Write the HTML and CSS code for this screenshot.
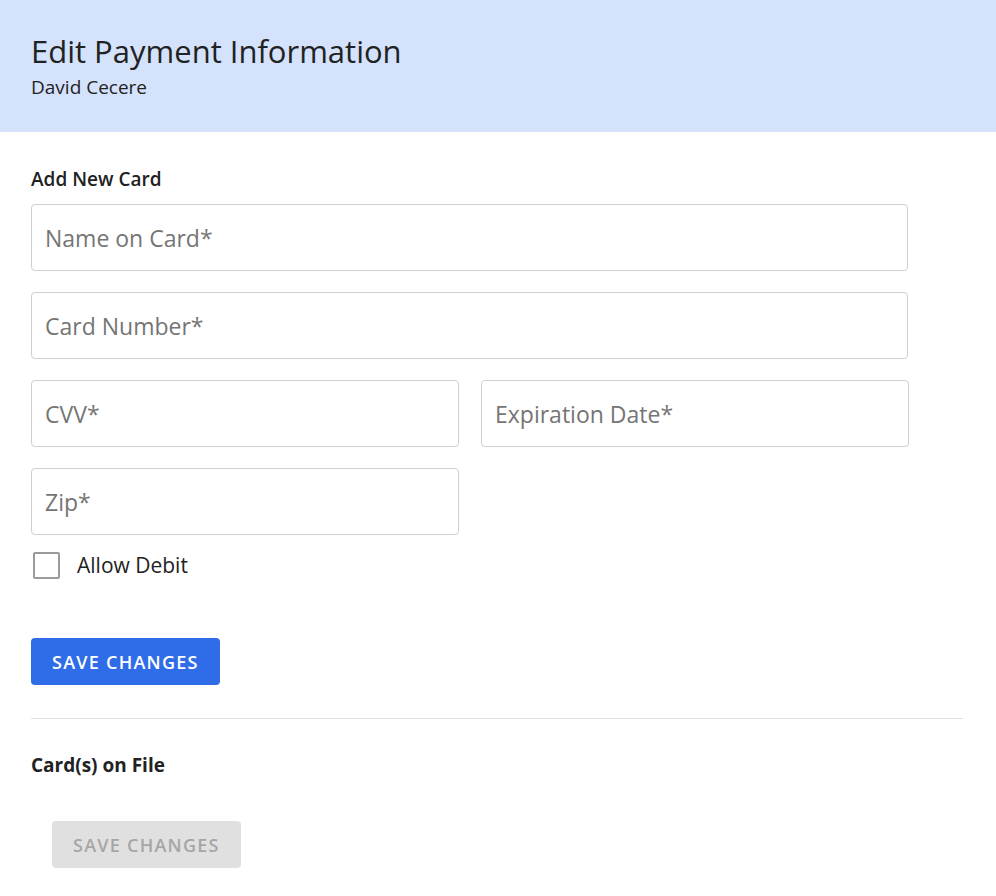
FILE: index.html
```html
<!DOCTYPE html>
<html>
<head>
<meta charset="utf-8">
<link rel="stylesheet" href="styles.css">
</head>
<body>
<header class="header">
  <h1 class="title">Edit Payment Information</h1>
  <div class="subtitle">David Cecere</div>
</header>
<main class="content">
  <h2 class="section-title">Add New Card</h2>
  <form class="form">
    <div class="field"><input class="input" placeholder="Name on Card*"></div>
    <div class="field"><input class="input" placeholder="Card Number*"></div>
    <div class="row">
      <input class="input" placeholder="CVV*">
      <input class="input" placeholder="Expiration Date*">
    </div>
    <div class="row">
      <input class="input" placeholder="Zip*">
    </div>
    <label class="check">
      <span class="box"></span>
      <span class="check-label">Allow Debit</span>
    </label>
    <button type="button" class="btn btn-primary">SAVE CHANGES</button>
  </form>
  <hr class="divider">
  <h2 class="section-title files">Card(s) on File</h2>
  <div class="files-actions">
    <button type="button" class="btn btn-disabled" disabled>SAVE CHANGES</button>
  </div>
</main>
</body>
</html>
```
FILE: styles.css
```css
* { box-sizing: border-box; }
body {
  margin: 0;
  font-family: "Open Sans", "Noto Sans", sans-serif;
  color: #212121;
  background: #fff;
}
.header {
  background: #d4e2fc;
  height: 132px;
  padding: 31px 31px 0;
}
.title {
  margin: 0;
  font-size: 31px;
  font-weight: 400;
  line-height: 40px;
  color: #222;
}
.subtitle {
  font-size: 19px;
  line-height: 26px;
  margin-top: 3px;
  color: #222;
}
.content {
  padding: 34px 33px 0 31px;
}
.section-title {
  margin: 0;
  font-size: 19px;
  font-weight: 600;
  line-height: 26px;
  color: #222;
}
.form {
  width: 877px;
  margin-top: 12px;
  display: flex;
  flex-direction: column;
  gap: 21px;
}
.input {
  display: block;
  width: 100%;
  height: 67px;
  border: 1px solid #cfcfcf;
  border-radius: 4px;
  padding: 0 13px;
  font-family: inherit;
  font-size: 23px;
  color: #222;
  background: #fff;
  outline: none;
}
.input::placeholder { color: #757575; }
.row {
  display: grid;
  grid-template-columns: 428px 428px;
  gap: 22px;
}
.check {
  display: flex;
  align-items: center;
  gap: 17px;
  margin-top: -5px;
  margin-left: 2px;
  height: 28px;
}
.box {
  width: 27px;
  height: 27px;
  border: 2px solid #9b9b9b;
  border-radius: 2px;
}
.check-label {
  font-size: 21px;
  color: #222;
}
.btn {
  height: 47px;
  border: none;
  border-radius: 4px;
  padding: 0 21px;
  font-family: inherit;
  font-size: 18px;
  font-weight: 600;
  letter-spacing: 1.25px;
}
.btn-primary {
  align-self: flex-start;
  margin-top: 38px;
  background: #2f6ce8;
  color: #fff;
}
.divider {
  margin: 33px 0 0;
  border: none;
  border-top: 1px solid #e0e0e0;
}
.files {
  margin-top: 33px;
  font-weight: 700;
}
.files-actions {
  padding: 43px 0 0 21px;
}
.btn-disabled {
  background: #e0e0e0;
  color: #a6a6a6;
}
```
